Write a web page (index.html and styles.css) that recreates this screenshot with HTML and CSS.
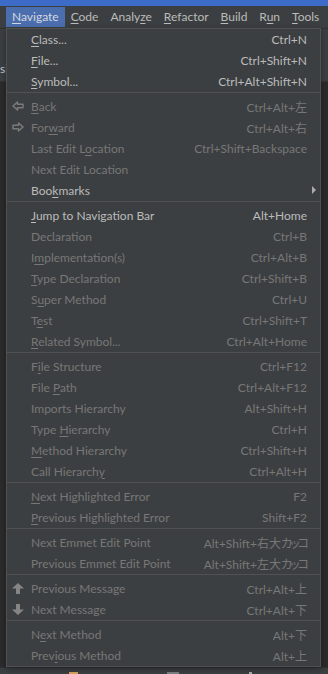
FILE: index.html
```html
<!DOCTYPE html>
<html lang="en">
  <head>
    <meta charset="UTF-8" />
    <meta name="viewport" content="width=device-width, initial-scale=1.0" />
    <title>Navigate menu</title>
    <link rel="stylesheet" href="styles.css">
  </head>
  <body>
    <div class="ide">
      <div class="titlebar"></div>

      <!-- Main menu bar -->
      <nav class="menubar">
        <span class="menu active"><u>N</u>avigate</span>
        <span class="menu"><u>C</u>ode</span>
        <span class="menu">Analy<u>z</u>e</span>
        <span class="menu"><u>R</u>efactor</span>
        <span class="menu"><u>B</u>uild</span>
        <span class="menu">R<u>u</u>n</span>
        <span class="menu"><u>T</u>ools</span>
      </nav>

      <div class="toolbar">
        <span class="crumb">si</span>
      </div>
      <div class="editor"></div>
      <div class="statusbar">
        <span class="tool orange"></span>
        <span class="tool gray"></span>
        <span class="tool light"></span>
      </div>

      <!-- Navigate popup -->
      <div class="popup">
        <div class="item"><span class="label"><u>C</u>lass...</span><span class="key">Ctrl+N</span></div>
        <div class="item"><span class="label"><u>F</u>ile...</span><span class="key">Ctrl+Shift+N</span></div>
        <div class="item"><span class="label"><u>S</u>ymbol...</span><span class="key">Ctrl+Alt+Shift+N</span></div>
        <div class="sep"></div>

        <div class="item disabled">
          <svg viewBox="0 0 12 10" width="12" height="10"><path d="M1 5 L5.5 1 V3.3 H11 V6.7 H5.5 V9 Z" /></svg>
          <span class="label"><u>B</u>ack</span><span class="key">Ctrl+Alt+左</span>
        </div>
        <div class="item disabled">
          <svg viewBox="0 0 12 10" width="12" height="10"><path d="M11 5 L6.5 1 V3.3 H1 V6.7 H6.5 V9 Z" /></svg>
          <span class="label">For<u>w</u>ard</span><span class="key">Ctrl+Alt+右</span>
        </div>
        <div class="item disabled"><span class="label">Last Edit L<u>o</u>cation</span><span class="key">Ctrl+Shift+Backspace</span></div>
        <div class="item disabled"><span class="label">Next Edit Location</span></div>
        <div class="item has-sub"><span class="label">Boo<u>k</u>marks</span></div>
        <div class="sep"></div>

        <div class="item"><span class="label"><u>J</u>ump to Navigation Bar</span><span class="key">Alt+Home</span></div>
        <div class="item disabled"><span class="label">Declaration</span><span class="key">Ctrl+B</span></div>
        <div class="item disabled"><span class="label">I<u>m</u>plementation(s)</span><span class="key">Ctrl+Alt+B</span></div>
        <div class="item disabled"><span class="label"><u>T</u>ype Declaration</span><span class="key">Ctrl+Shift+B</span></div>
        <div class="item disabled"><span class="label">S<u>u</u>per Method</span><span class="key">Ctrl+U</span></div>
        <div class="item disabled"><span class="label">T<u>e</u>st</span><span class="key">Ctrl+Shift+T</span></div>
        <div class="item disabled"><span class="label"><u>R</u>elated Symbol...</span><span class="key">Ctrl+Alt+Home</span></div>
        <div class="sep"></div>

        <div class="item disabled"><span class="label">F<u>i</u>le Structure</span><span class="key">Ctrl+F12</span></div>
        <div class="item disabled"><span class="label">File <u>P</u>ath</span><span class="key">Ctrl+Alt+F12</span></div>
        <div class="item disabled"><span class="label">Imports Hierarchy</span><span class="key">Alt+Shift+H</span></div>
        <div class="item disabled"><span class="label">Type <u>H</u>ierarchy</span><span class="key">Ctrl+H</span></div>
        <div class="item disabled"><span class="label"><u>M</u>ethod Hierarchy</span><span class="key">Ctrl+Shift+H</span></div>
        <div class="item disabled"><span class="label">Call Hierarch<u>y</u></span><span class="key">Ctrl+Alt+H</span></div>
        <div class="sep"></div>

        <div class="item disabled"><span class="label"><u>N</u>ext Highlighted Error</span><span class="key">F2</span></div>
        <div class="item disabled"><span class="label"><u>P</u>revious Highlighted Error</span><span class="key">Shift+F2</span></div>
        <div class="sep"></div>

        <div class="item disabled"><span class="label">Next Emmet Edit Point</span><span class="key">Alt+Shift+右大<span class="kana">カッコ</span></span></div>
        <div class="item disabled"><span class="label">Previous Emmet Edit Point</span><span class="key">Alt+Shift+左大<span class="kana">カッコ</span></span></div>
        <div class="sep"></div>

        <div class="item disabled">
          <svg class="solid" viewBox="0 0 12 11" width="12" height="11"><path d="M6 0 L12 5.5 H8 V11 H4 V5.5 H0 Z" /></svg>
          <span class="label">Previous Message</span><span class="key">Ctrl+Alt+上</span>
        </div>
        <div class="item disabled">
          <svg class="solid" viewBox="0 0 12 11" width="12" height="11"><path d="M6 11 L12 5.5 H8 V0 H4 V5.5 H0 Z" /></svg>
          <span class="label">Next Message</span><span class="key">Ctrl+Alt+下</span>
        </div>
        <div class="sep"></div>

        <div class="item disabled"><span class="label">N<u>e</u>xt Method</span><span class="key">Alt+下</span></div>
        <div class="item disabled"><span class="label">Prev<u>i</u>ous Method</span><span class="key">Alt+上</span></div>
      </div>
    </div>
  </body>
</html>
```
FILE: styles.css
```css
body {
  margin: 0;
  background-color: #2b2b2b;
  font-family: Lato, "Noto Sans CJK JP", sans-serif;
  font-size: 12px;
  color: #bbbbbb;
  overflow: hidden;
}
u {
  text-underline-offset: 2px;
}
.ide {
  position: relative;
  width: 328px;
  height: 674px;
  display: flex;
  flex-direction: column;
}
.titlebar {
  height: 6px;
  background-color: #3d6cc8;
}
.menubar {
  height: 20px;
  padding: 1px 0 1px 6px;
  display: flex;
  background-color: #3c3f41;
  white-space: nowrap;
}
.menu {
  padding: 0 6px;
  line-height: 20px;
}
.menu.active {
  background-color: #4b6eaf;
  color: #d4d8de;
}
.toolbar {
  height: 53px;
  display: flex;
  align-items: flex-end;
  padding-bottom: 5px;
  box-sizing: border-box;
  background-color: #3c3f41;
  border-top: 1px solid #323232;
}
.crumb {
  color: #c8c8c8;
  line-height: 14px;
}
.editor {
  flex-grow: 1;
  background-color: #2b2b2b;
  border-top: 1px solid #323232;
}
.statusbar {
  height: 6px;
  display: flex;
  align-items: flex-end;
  background-color: #3c3f41;
  border-top: 1px solid #2f3133;
}
.tool {
  height: 2px;
}
.tool.orange {
  width: 9px;
  margin-left: 69px;
  background-color: #d9a35f;
}
.tool.gray {
  width: 12px;
  margin-left: 89px;
  background-color: #7d8083;
}
.tool.light {
  width: 3px;
  margin-left: 70px;
  background-color: #a9abad;
}

/* Popup menu */
.popup {
  position: absolute;
  top: 28px;
  left: 6px;
  width: 313px;
  background-color: #3c3f41;
  border: 1px solid #515151;
  box-shadow: 0 2px 6px rgba(0, 0, 0, 0.35);
}
.item {
  height: 21px;
  display: flex;
  align-items: center;
  padding: 0 13px 1px 24px;
  box-sizing: border-box;
  white-space: nowrap;
  color: #bbbbbb;
}
.item.disabled {
  color: #777777;
}
.item svg {
  margin-left: -19px;
  margin-right: 7px;
  fill: none;
  stroke: #7a7a7a;
  stroke-width: 1.5;
  stroke-linejoin: round;
}
.item svg.solid {
  fill: #858585;
  stroke: none;
}
.label {
  flex-grow: 1;
}
.key {
  font-feature-settings: "palt";
}
.kana {
  letter-spacing: -2px;
}
.item.has-sub::after {
  content: "";
  margin-right: -9px;
  border-left: 4px solid #aaaaaa;
  border-top: 4px solid transparent;
  border-bottom: 4px solid transparent;
}
.sep {
  height: 3px;
  border-top: 1px solid #515151;
}
```
